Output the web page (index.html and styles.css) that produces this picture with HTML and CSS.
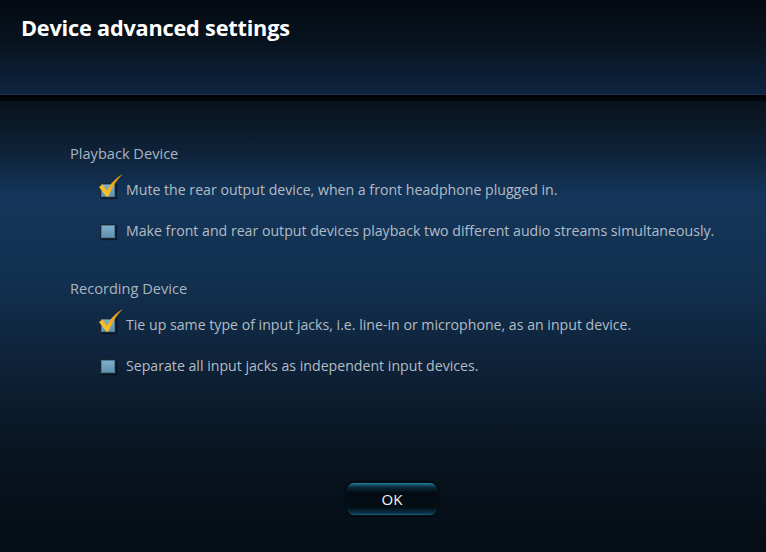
FILE: index.html
```html
<!DOCTYPE html>
<html>
<head>
<meta charset="utf-8">
<link rel="stylesheet" href="styles.css">
</head>
<body>
<div class="window">
  <header class="header">
    <h1 class="title">Device advanced settings</h1>
  </header>
  <div class="divider"></div>
  <main class="content">
    <div class="groups">
      <section class="group">
        <div class="group-label">Playback Device</div>
        <label class="option">
          <span class="box checked">
            <svg class="tick" viewBox="0 0 26 24" width="26" height="24"><defs><linearGradient id="tg1" x1="0" y1="1" x2="1" y2="0"><stop offset="0" stop-color="#fbd02a"/><stop offset="0.6" stop-color="#f0a518"/><stop offset="1" stop-color="#e07d10"/></linearGradient></defs><path d="M1 13 L4.5 10.5 L9 16.5 C12.5 9.5 17.5 4 25 0 C19 5.5 14.5 12.5 10.5 22.5 L8.5 22.5 Z" fill="url(#tg1)"/></svg>
          </span>
          <span class="text">Mute the rear output device, when a front headphone plugged in.</span>
        </label>
        <label class="option">
          <span class="box"></span>
          <span class="text">Make front and rear output devices playback two different audio streams simultaneously.</span>
        </label>
      </section>
      <section class="group">
        <div class="group-label">Recording Device</div>
        <label class="option">
          <span class="box checked">
            <svg class="tick" viewBox="0 0 26 24" width="26" height="24"><defs><linearGradient id="tg2" x1="0" y1="1" x2="1" y2="0"><stop offset="0" stop-color="#fbd02a"/><stop offset="0.6" stop-color="#f0a518"/><stop offset="1" stop-color="#e07d10"/></linearGradient></defs><path d="M1 13 L4.5 10.5 L9 16.5 C12.5 9.5 17.5 4 25 0 C19 5.5 14.5 12.5 10.5 22.5 L8.5 22.5 Z" fill="url(#tg2)"/></svg>
          </span>
          <span class="text">Tie up same type of input jacks, i.e. line-in or microphone, as an input device.</span>
        </label>
        <label class="option">
          <span class="box"></span>
          <span class="text">Separate all input jacks as independent input devices.</span>
        </label>
      </section>
    </div>
    <div class="actions">
      <button class="ok">OK</button>
    </div>
  </main>
</div>
</body>
</html>
```

FILE: styles.css
```css
html, body {
  margin: 0;
  padding: 0;
  background: #050d15;
}
.window {
  width: 766px;
  height: 552px;
  overflow: hidden;
  display: flex;
  flex-direction: column;
  font-family: "Open Sans", "Noto Sans", sans-serif;
}
.header {
  height: 95px;
  box-sizing: border-box;
  padding: 13px 0 0 21px;
  background: linear-gradient(to bottom, #050a11 0%, #08131f 45%, #0f2440 100%);
  border-bottom: 1px solid #15304c;
}
.title {
  margin: 0;
  font-family: "Open Sans", sans-serif;
  font-weight: 700;
  font-size: 21.7px;
  line-height: 30px;
  color: #ffffff;
  letter-spacing: -0.2px;
}
.divider {
  height: 6px;
  background: linear-gradient(to bottom, #010307, #03070c);
}
.content {
  flex: 1;
  display: flex;
  flex-direction: column;
  background: linear-gradient(to bottom, #08121b 0px, #0e2238 50px, #14365a 96px, #12304f 180px, #0d1f33 280px, #08141f 360px, #050d15 451px);
}
.groups {
  display: flex;
  flex-direction: column;
  gap: 37px;
  padding: 42px 0 0 70px;
}
.group {
  display: flex;
  flex-direction: column;
  gap: 21px;
}
.group-label {
  font-size: 14.6px;
  line-height: 20px;
  color: #a9b5c1;
  margin-bottom: -4px;
}
.option {
  display: flex;
  align-items: center;
  gap: 10px;
  margin-left: 30px;
  height: 20px;
}
.box {
  position: relative;
  width: 16px;
  height: 15px;
  box-sizing: border-box;
  border: 1px solid #1a2733;
  background: linear-gradient(to bottom, #80b1cd, #5e90af);
  box-shadow: inset 0 0 0 1px #4d7897, 1px 1px 1px rgba(0,0,0,0.5);
  flex: none;
}
.tick {
  position: absolute;
  left: -3px;
  top: -10px;
}
.text {
  font-size: 14.15px;
  line-height: 20px;
  color: #b2bcc6;
  white-space: nowrap;
}
.actions {
  display: flex;
  justify-content: center;
  margin-top: auto;
  margin-bottom: 36px;
  padding-left: 18px;
}
.ok {
  width: 92px;
  height: 34px;
  border-radius: 8px;
  border: 1px solid #05131d;
  background: linear-gradient(to bottom, #1f7f9e 0px, #0a2a3b 4px, #030b13 10px, #040c14 24px, #0b3246 30px, #2290b0 34px);
  color: #f2f5f8;
  font-family: "Open Sans", sans-serif;
  font-size: 15px;
  padding: 0;
  box-shadow: 0 0 0 1px #020609;
}
```
